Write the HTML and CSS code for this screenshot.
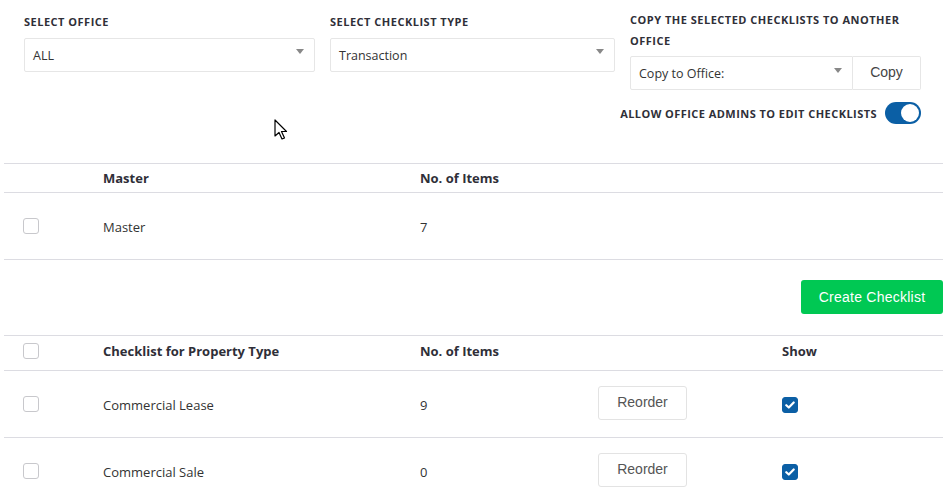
FILE: index.html
```html
<!DOCTYPE html>
<html>
<head>
<meta charset="utf-8">
<link rel="stylesheet" href="styles.css">
</head>
<body>
<div class="page">
  <div class="filters">
    <div class="field f1">
      <div class="label">Select Office</div>
      <div class="select"><span>ALL</span><i class="caret"></i></div>
    </div>
    <div class="field f2">
      <div class="label">Select Checklist Type</div>
      <div class="select"><span>Transaction</span><i class="caret"></i></div>
    </div>
    <div class="field f3">
      <div class="label">Copy the selected checklists to another office</div>
      <div class="group">
        <div class="select sel-copy"><span>Copy to Office:</span><i class="caret"></i></div>
        <div class="btn-copy">Copy</div>
      </div>
      <div class="toggle-row">
        <span class="toggle-label">Allow office admins to edit checklists</span>
        <span class="toggle"><span class="knob"></span></span>
      </div>
    </div>
    <svg class="cursor" width="14" height="22" viewBox="0 0 14 22"><path d="M1 1 L1 17 L5 13.5 L8 20 L10.5 19 L7.5 12.5 L12.5 12.5 Z" fill="#fff" stroke="#000" stroke-width="1.2" stroke-linejoin="round"/></svg>
  </div>

  <div class="table t1">
    <div class="row head">
      <div class="c1"></div>
      <div class="c2">Master</div>
      <div class="c3">No. of Items</div>
      <div class="c4"></div>
      <div class="c5"></div>
    </div>
    <div class="row body">
      <div class="c1"><span class="cb"></span></div>
      <div class="c2">Master</div>
      <div class="c3">7</div>
      <div class="c4"></div>
      <div class="c5"></div>
    </div>
  </div>

  <div class="actions"><div class="btn-create">Create Checklist</div></div>

  <div class="table t2">
    <div class="row head">
      <div class="c1"><span class="cb"></span></div>
      <div class="c2">Checklist for Property Type</div>
      <div class="c3">No. of Items</div>
      <div class="c4"></div>
      <div class="c5">Show</div>
    </div>
    <div class="row body">
      <div class="c1"><span class="cb"></span></div>
      <div class="c2">Commercial Lease</div>
      <div class="c3">9</div>
      <div class="c4"><span class="btn-reorder">Reorder</span></div>
      <div class="c5"><span class="cb checked"><svg width="10" height="8" viewBox="0 0 10 8"><path d="M1.3 4.2 L3.8 6.5 L8.7 1.5" fill="none" stroke="#fff" stroke-width="2.2" stroke-linecap="round" stroke-linejoin="round"/></svg></span></div>
    </div>
    <div class="row body">
      <div class="c1"><span class="cb"></span></div>
      <div class="c2">Commercial Sale</div>
      <div class="c3">0</div>
      <div class="c4"><span class="btn-reorder">Reorder</span></div>
      <div class="c5"><span class="cb checked"><svg width="10" height="8" viewBox="0 0 10 8"><path d="M1.3 4.2 L3.8 6.5 L8.7 1.5" fill="none" stroke="#fff" stroke-width="2.2" stroke-linecap="round" stroke-linejoin="round"/></svg></span></div>
    </div>
  </div>
</div>
</body>
</html>
```

FILE: styles.css
```css
html, body {
  margin: 0;
  padding: 0;
  background: #fff;
}
body {
  font-family: "Open Sans", "Noto Sans", sans-serif;
  color: #333;
  width: 952px;
  height: 500px;
  overflow: hidden;
}
.page {
  width: 952px;
}
.filters {
  position: relative;
  display: flex;
  padding: 10px 0 0 24px;
  height: 153px;
  box-sizing: content-box;
}
.field {
  display: flex;
  flex-direction: column;
}
.f1 { width: 291px; margin-right: 15px; }
.f2 { width: 285px; margin-right: 15px; }
.f3 { width: 291px; }
.label {
  font-size: 11px;
  font-weight: 700;
  text-transform: uppercase;
  line-height: 20.5px;
  color: #2f2f38;
  margin-bottom: 5px;
  padding-top: 2px;
  letter-spacing: 0.5px;
}
.f3 .label {
  padding-top: 0;
  margin-bottom: 5px;
}
.select {
  height: 34px;
  box-sizing: border-box;
  border: 1px solid #e6e6e6;
  border-radius: 2px;
  display: flex;
  align-items: center;
  justify-content: space-between;
  padding: 0 10px 0 8px;
  font-size: 12.5px;
  color: #333;
}
.select span {
  margin-top: 1px;
}
.caret {
  width: 0;
  height: 0;
  border-left: 4.5px solid transparent;
  border-right: 4.5px solid transparent;
  border-top: 5px solid #888;
  margin-top: -6px;
}
.group {
  display: flex;
  width: 291px;
}
.sel-copy {
  width: 223px;
  border-radius: 2px 0 0 2px;
  padding-right: 10px;
}
.btn-copy {
  width: 68px;
  height: 34px;
  box-sizing: border-box;
  border: 1px solid #e6e6e6;
  border-left: none;
  border-radius: 0 2px 2px 0;
  display: flex;
  align-items: center;
  justify-content: center;
  font-family: "Liberation Sans", Arial, sans-serif;
  font-size: 14px;
  color: #444;
  padding-bottom: 2px;
}
.toggle-row {
  display: flex;
  justify-content: flex-end;
  align-items: center;
  margin-top: 12px;
  width: 291px;
  white-space: nowrap;
}
.toggle-label {
  font-size: 11px;
  font-weight: 700;
  text-transform: uppercase;
  color: #2f2f38;
  margin-right: 8px;
  letter-spacing: 0.45px;
}
.toggle {
  flex: none;
  width: 36px;
  height: 22px;
  border-radius: 11px;
  background: #0b5fa5;
  display: flex;
  justify-content: flex-end;
  align-items: center;
  padding: 0 2px;
  box-sizing: border-box;
}
.knob {
  width: 18px;
  height: 18px;
  border-radius: 50%;
  background: #fff;
}
.cursor {
  position: absolute;
  left: 274px;
  top: 119px;
}

.table {
  margin-left: 4px;
  width: 939px;
}
.row {
  display: grid;
  grid-template-columns: 99px 317px 178px 184px 161px;
  align-items: center;
  border-top: 1px solid #dcdce2;
  font-size: 13px;
  color: #333;
  box-sizing: border-box;
}
.row.head {
  font-weight: 700;
  color: #2f2f38;
}
.row.body .c2,
.row.body .c3 {
  padding-top: 2px;
}
.t1 .row.head { height: 29px; padding-bottom: 1px; }
.t1 .row.body {
  height: 68px;
  border-bottom: 1px solid #dcdce2;
}
.t2 .row.head { height: 35px; padding-bottom: 5px; }
.t2 .row.body { height: 67px; }
.c1 {
  padding-left: 19px;
  display: flex;
  align-items: center;
}
.cb {
  width: 16px;
  height: 16px;
  box-sizing: border-box;
  border: 1px solid #c8c8cc;
  border-radius: 3px;
  display: inline-flex;
  align-items: center;
  justify-content: center;
  background: #fff;
}
.cb.checked {
  background: #0b5fa5;
  border-color: #0b5fa5;
}
.t2 .row.body .c5 .cb { margin-top: -3px; }
.btn-reorder {
  display: inline-flex;
  align-items: center;
  justify-content: center;
  width: 89px;
  height: 34px;
  box-sizing: border-box;
  border: 1px solid #e3e3e3;
  border-radius: 3px;
  font-family: "Liberation Sans", Arial, sans-serif;
  font-size: 14px;
  color: #555;
  margin-top: -3px;
  padding-bottom: 2px;
}
.actions {
  display: flex;
  justify-content: flex-end;
  padding: 20px 9px 21px 0;
}
.btn-create {
  width: 142px;
  height: 34px;
  box-sizing: border-box;
  background: #00c853;
  border-radius: 3px;
  color: #fff;
  font-family: "Liberation Sans", Arial, sans-serif;
  font-size: 14px;
  letter-spacing: 0.25px;
  display: flex;
  align-items: center;
  justify-content: center;
  padding-bottom: 1px;
}
```
